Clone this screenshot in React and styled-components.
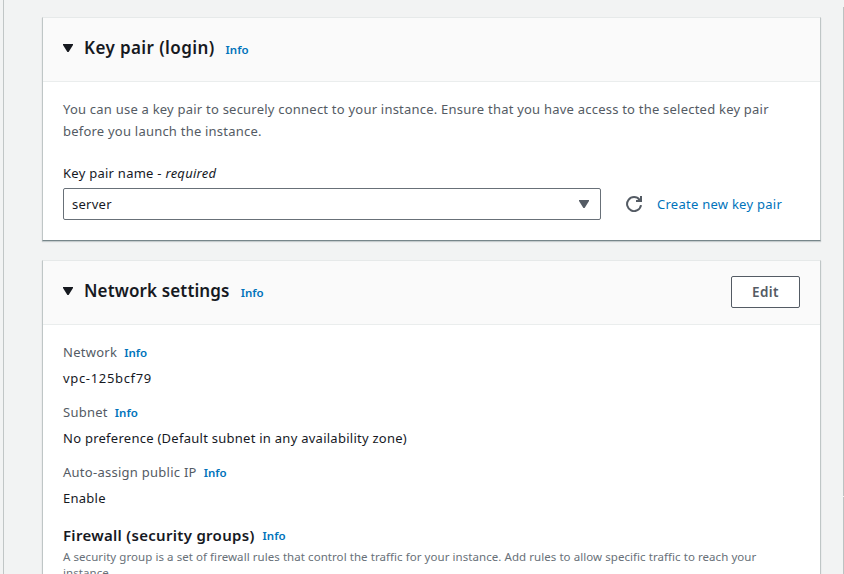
import React from "react";
import styled, { createGlobalStyle } from "styled-components";

const GlobalStyle = createGlobalStyle`
  * { box-sizing: border-box; }
  body {
    margin: 0;
    height: 574px;
    overflow: hidden;
    background: #f2f3f3;
    color: #16191f;
    font-family: "Noto Sans", "Open Sans", sans-serif;
    font-size: 13px;
    line-height: 22px;
    letter-spacing: 0.26px;
  }
  h2, h3, p, dl, dd, dt { margin: 0; }
`;

const Page = styled.div`
  display: flex;
  height: 574px;
  padding-left: 3px;
  overflow: hidden;
`;

const Main = styled.main`
  flex: 1;
  display: flex;
  flex-direction: column;
  gap: 19px;
  padding: 17px 22px 0 38px;
  border-left: 1px solid #c1c6c6;
`;

const Rail = styled.aside`
  width: 1px;
  display: flex;
  flex-direction: column;
  gap: 1px;
  padding-top: 7px;
`;

const RailLine = styled.div`
  background: #bcc2c2;
  height: ${(p) => p.$height}px;
  flex: none;
`;

const Card = styled.section`
  flex: none;
  height: ${(p) => p.$height}px;
  background: #fff;
  border: 1px solid #bfc6c6;
  border-top-color: #e6e9e9;
  border-bottom-color: #77868a;
  box-shadow: 0 1px 1px rgba(0, 28, 36, 0.18);
`;

const CardHeader = styled.header`
  display: flex;
  align-items: center;
  height: 64px;
  padding: 0 20px 2px;
  background: #fafafa;
  border-bottom: 1px solid #eaeded;
`;

const Caret = styled.svg`
  flex: none;
  display: block;
  width: 10px;
  height: 8px;
  margin-bottom: ${(p) => p.$lift || 0}px;
  fill: ${(p) => p.$color || "#16191f"};
`;

const Title = styled.h2`
  margin-left: 11px;
  padding-bottom: 2px;
  font-size: 17px;
  font-weight: 600;
  line-height: 24px;
  letter-spacing: ${(p) => p.$spacing || 0}px;
  white-space: nowrap;
`;

const Info = styled.a`
  margin-left: ${(p) => p.$gap || 7}px;
  padding-top: ${(p) => p.$drop || 0}px;
  color: #0073bb;
  font-size: 11.5px;
  font-weight: 600;
  line-height: 16px;
  letter-spacing: 0;
`;

const CardBody = styled.div`
  padding: 16px 20px 0;
`;

const Description = styled.p`
  color: #545b64;
  white-space: nowrap;
  letter-spacing: 0.22px;
`;

const FieldLabel = styled.div`
  margin-top: 20px;
`;

const FieldRow = styled.div`
  display: flex;
  align-items: center;
  margin-top: 4px;
`;

const Select = styled.div`
  display: flex;
  align-items: center;
  justify-content: space-between;
  width: 538px;
  height: 32px;
  padding: 0 11px 0 8px;
  border: 1px solid #687078;
  border-radius: 2px;
`;

const RefreshIcon = styled.svg`
  display: block;
  width: 16px;
  height: 16px;
  margin-left: 25px;
  fill: none;
  stroke: #545b64;
  stroke-width: 2;
`;

const Link = styled.a`
  margin-left: 15px;
  color: #0073bb;
`;

const Button = styled.button`
  margin-left: auto;
  width: 69px;
  height: 32px;
  padding: 0;
  border: 1px solid #545b64;
  border-radius: 2px;
  background: #fff;
  color: #545b64;
  font: 600 13.5px/20px "Noto Sans", sans-serif;
  letter-spacing: 0.4px;
`;

const Item = styled.div`
  height: 60px;
  white-space: nowrap;
`;

const Term = styled.dt`
  display: flex;
  align-items: center;
  color: #545b64;
`;

const Value = styled.dd`
  margin-top: 4px;
  letter-spacing: ${(p) => p.$spacing || 0.26}px;
`;

const Subheading = styled.h3`
  display: flex;
  align-items: center;
  margin-top: 3px;
  font-size: 15px;
  font-weight: 600;
  letter-spacing: 0.3px;
`;

const Hint = styled.p`
  margin-top: 3px;
  color: #687078;
  font-size: 11.5px;
  line-height: 16px;
  white-space: nowrap;
  letter-spacing: 0.06px;
`;

const CaretIcon = ({ color, lift }) => (
  <Caret viewBox="0 0 10 8" $color={color} $lift={lift}>
    <path d="M0 0h10v1L5.6 8H4.4L0 1z" />
  </Caret>
);

const details = [
  { term: "Network", value: "vpc-125bcf79", spacing: 0.67 },
  { term: "Subnet", value: "No preference (Default subnet in any availability zone)" },
  { term: "Auto-assign public IP", value: "Enable" },
];

export default function App() {
  return (
    <>
      <GlobalStyle />
      <Page>
        <Main>
          <Card $height={224}>
            <CardHeader>
              <CaretIcon lift={2} />
              <Title $spacing={0.4}>Key pair (login)</Title>
              <Info $gap={11} $drop={2}>Info</Info>
            </CardHeader>
            <CardBody>
              <Description>
                You can use a key pair to securely connect to your instance. Ensure that you have access to the selected key pair
                <br />
                before you launch the instance.
              </Description>
              <FieldLabel>
                Key pair name - <em>required</em>
              </FieldLabel>
              <FieldRow>
                <Select>
                  server
                  <CaretIcon color="#545b64" />
                </Select>
                <RefreshIcon viewBox="0 0 16 16">
                  <path d="M15 9.2A7 7 0 1 1 13.6 3.8L14.5 5" />
                  <path d="M15 0v5H10M12 4h3" />
                </RefreshIcon>
                <Link>Create new key pair</Link>
              </FieldRow>
            </CardBody>
          </Card>
          <Card $height={420}>
            <CardHeader>
              <CaretIcon lift={2} />
              <Title $spacing={0.13}>Network settings</Title>
              <Info $gap={11} $drop={2}>Info</Info>
              <Button>Edit</Button>
            </CardHeader>
            <CardBody>
              <dl>
                {details.map((d) => (
                  <Item key={d.term}>
                    <Term>
                      {d.term}
                      <Info $drop={1}>Info</Info>
                    </Term>
                    <Value $spacing={d.spacing}>{d.value}</Value>
                  </Item>
                ))}
              </dl>
              <Subheading>
                Firewall (security groups)
                <Info $gap={8} $drop={2}>Info</Info>
              </Subheading>
              <Hint>
                A security group is a set of firewall rules that control the traffic for your instance. Add rules to allow specific traffic to reach your
                <br />
                instance.
              </Hint>
            </CardBody>
          </Card>
        </Main>
        <Rail>
          <RailLine $height={489} />
          <RailLine $height={77} />
        </Rail>
      </Page>
    </>
  );
}
